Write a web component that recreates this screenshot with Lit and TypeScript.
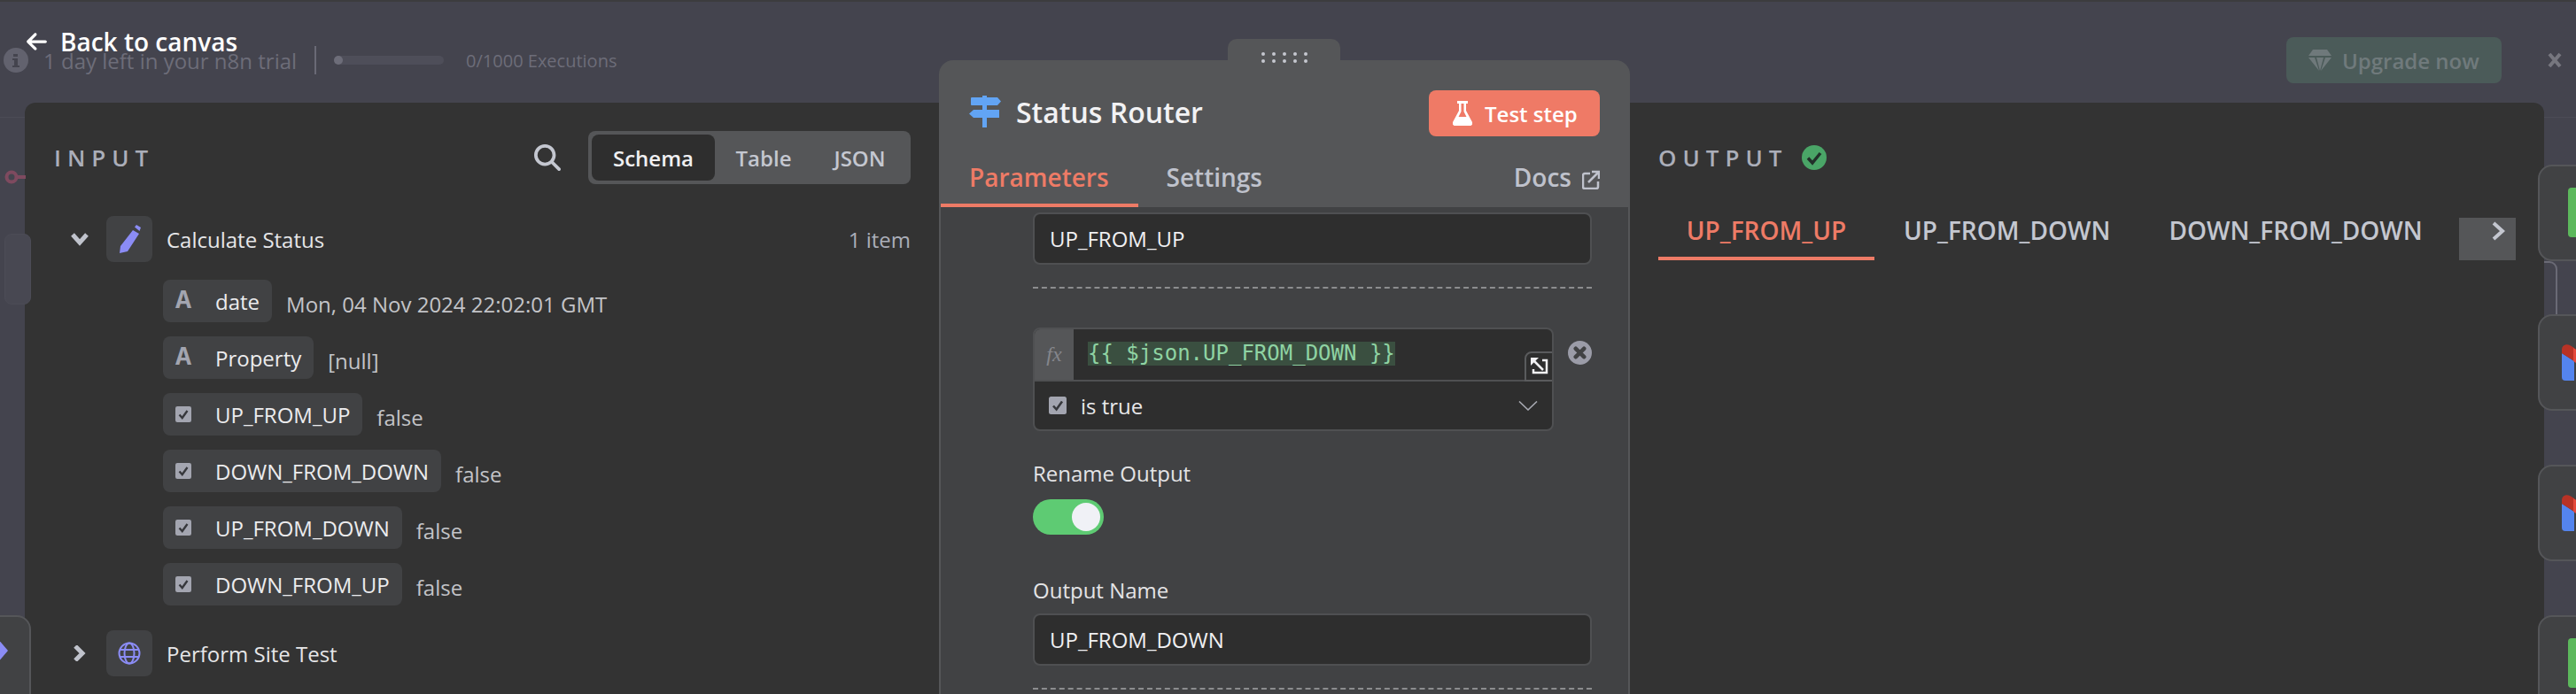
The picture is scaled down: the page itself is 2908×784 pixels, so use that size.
import { LitElement, html, css, svg } from "lit";
import { customElement } from "lit/decorators.js";

const arrowLeft = svg`<path fill="currentColor" d="M9.4 233.4c-12.5 12.5-12.5 32.8 0 45.3l160 160c12.5 12.5 32.8 12.5 45.3 0s12.5-32.8 0-45.3L109.2 288 416 288c17.7 0 32-14.3 32-32s-14.3-32-32-32l-306.7 0L214.6 118.6c12.5-12.5 12.5-32.8 0-45.3s-32.8-12.5-45.3 0l-160 160z"/>`;
const search = svg`<path fill="currentColor" d="M416 208c0 45.9-14.9 88.3-40 122.7L502.6 457.4c12.5 12.5 12.5 32.8 0 45.3s-32.8 12.5-45.3 0L330.7 376c-34.4 25.2-76.8 40-122.7 40C93.1 416 0 322.9 0 208S93.1 0 208 0S416 93.1 416 208zM208 352a144 144 0 1 0 0-288 144 144 0 1 0 0 288z"/>`;

type Field = { type: "text" | "bool"; name: string; value: string };
const fields: Field[] = [
  { type: "text", name: "date", value: "Mon, 04 Nov 2024 22:02:01 GMT" },
  { type: "text", name: "Property", value: "[null]" },
  { type: "bool", name: "UP_FROM_UP", value: "false" },
  { type: "bool", name: "DOWN_FROM_DOWN", value: "false" },
  { type: "bool", name: "UP_FROM_DOWN", value: "false" },
  { type: "bool", name: "DOWN_FROM_UP", value: "false" },
];

const checkBox = (cls: string) => html`<svg class=${cls} viewBox="0 0 20 20">
  <rect width="20" height="20" rx="2.5" fill="#a3a5b0"/>
  <path d="M5 10.5 8.6 14.5 15 5.5" fill="none" stroke="#37383c" stroke-width="2.6"/>
</svg>`;

const gmail = svg`<path d="M0 10 14 19V41H4a4 4 0 0 1-4-4z" fill="#5484ee"/><path d="M0 10V6C0 1 5-1 9 1L14 4V19z" fill="#b83225"/><path d="M13 4 27 12V28L13 19z" fill="#e4493b"/>`;

@customElement("app-root")
export class AppRoot extends LitElement {
  static styles = css`
    :host { display: block; position: relative; width: 2908px; height: 784px; overflow: hidden;
      font-family: "Open Sans", sans-serif; background: #44444e; color: #e8e8ea; }
    svg { display: block; flex: none; }
    .page { height: 784px; display: flex; flex-direction: column; border-top: 2px solid #3c3c3e; box-sizing: border-box; }

    .banner { height: 114px; box-sizing: border-box; padding: 18px 15px 0 4px; display: flex; align-items: center; flex: none; color: #6d6d79; }
    .info { width: 28px; height: 28px; }
    .trial { margin-left: 17px; font-size: 24px; white-space: nowrap; }
    .vr { width: 2px; height: 32px; background: #6a6a76; margin: 0 20px 0 20px; }
    .bar { width: 124px; height: 10px; border-radius: 5px; background: #4e4e59; }
    .bar i { display: block; width: 10px; height: 10px; border-radius: 50%; background: #6d6d79; }
    .execs { margin-left: 25px; font-size: 20px; white-space: nowrap; }
    .upgrade { margin-left: auto; width: 243px; height: 52px; box-sizing: border-box; padding-left: 25px; border-radius: 8px;
      background: #4b5b59; display: flex; align-items: center; gap: 12px; font-size: 24px; font-weight: 600; color: #707a7c; white-space: nowrap; }
    .gem { width: 26px; height: 24px; }
    .x { margin-left: 51px; width: 18px; height: 18px; color: #77777f; }

    .panel { flex: 1; margin: 0 36px 0 28px; background: #333333; border-radius: 12px 12px 0 0; display: grid; grid-template-columns: 1004px 840px 1fr; min-height: 0; }
    .in { padding: 32px 4px 0 33px; }
    .out { grid-column: 3; padding: 32px 32px 0 0; }
    .phead { height: 60px; display: flex; align-items: center; }
    .ptitle { font-size: 26px; font-weight: 600; letter-spacing: 7px; color: #abaeb9; white-space: nowrap; }
    .search { width: 30px; height: 30px; color: #c4c7d0; margin-left: auto; margin-right: 31px; }
    .switch { width: 364px; height: 60px; box-sizing: border-box; border-radius: 8px; background: #555658; padding: 4px; display: flex; align-items: center; font-size: 24px; font-weight: 600; color: #c4c7d0; }
    .switch span { height: 52px; display: flex; align-items: center; justify-content: center; }
    .switch .on { width: 139px; background: #2e2e2e; border-radius: 8px; color: #f0f0f2; }
    .switch .t { width: 110px; }
    .switch .j { width: 107px; }

    .node { display: flex; align-items: center; height: 52px; margin-top: 36px; font-size: 24px; color: #e6e6e8; }
    .node.second { margin-top: 28px; }
    .chev { width: 22px; height: 18px; margin-left: 18px; color: #c0c3cc; }
    .nicon { width: 52px; height: 52px; border-radius: 8px; background: #414244; margin-left: 19px; display: flex; align-items: center; justify-content: center; }
    .node b { font-weight: 400; margin-left: 16px; white-space: nowrap; }
    .count { margin-left: auto; color: #abaeb9; white-space: nowrap; }

    .fields { margin: 20px 0 0 123px; display: flex; flex-direction: column; gap: 16px; }
    .row { display: flex; align-items: center; height: 48px; }
    .pill { height: 48px; box-sizing: border-box; padding: 0 14px; border-radius: 8px; background: #414244; display: flex; align-items: center; font-size: 24px; color: #ececee; white-space: nowrap; }
    .ticon { width: 18px; margin-right: 27px; font: 700 30px "Liberation Mono", monospace; color: #a3a5b0; line-height: 1; display: flex; justify-content: center; }
    .pcheck { width: 18px; height: 18px; margin-right: 27px; }
    .val { margin: 6px 0 0 16px; font-size: 24px; color: #c3c4c8; white-space: nowrap; }

    .ohead { display: flex; align-items: center; gap: 16px; }
    .ok { width: 28px; height: 28px; }
    .otabs { height: 70px; margin-top: 16px; display: flex; align-items: flex-start; font-size: 28px; font-weight: 600; color: #c4c7d0; position: relative; }
    .otab { padding: 16px 33px 0; box-sizing: border-box; white-space: nowrap; line-height: 40px; }
    .otab.on { color: #ee7b66; border-bottom: 4px solid #ee7b66; height: 70px; width: 244px; padding: 16px 0 0; text-align: center; }
    .next { position: absolute; right: 0; top: 22px; width: 64px; height: 48px; background: #555658; }
    .next svg { position: absolute; left: 36px; top: 4px; width: 16px; height: 22px; }

    .ndv { position: absolute; left: 1060px; top: 68px; width: 780px; height: 716px; display: flex; flex-direction: column; }
    .grip { position: absolute; left: 326px; top: -24px; width: 127px; height: 24px; background: #555658; border-radius: 10px 10px 0 0; }
    .dots { position: absolute; left: 38px; top: 15px; width: 52px; display: grid; grid-template-columns: repeat(5, 4px); justify-content: space-between; row-gap: 4px; }
    .dots i { width: 4px; height: 4px; border-radius: 50%; background: #c5c7cf; }
    .nhead { background: #555658; border-radius: 16px 16px 0 0; height: 166px; box-sizing: border-box; padding: 34px 34px 0; flex: none; }
    .title { display: flex; align-items: center; height: 52px; }
    .sign { width: 36px; height: 36px; margin-top: -4px; }
    .title h1 { margin: -2px 0 0 17px; font-size: 32px; font-weight: 600; color: #f2f2f4; line-height: 44px; white-space: nowrap; }
    .test { margin-left: auto; width: 193px; height: 52px; border-radius: 8px; background: #ef7a66; display: flex; align-items: center; box-sizing: border-box; padding-left: 27px; gap: 14px; font-size: 24px; font-weight: 600; color: #fff; white-space: nowrap; }
    .flask { width: 22px; height: 28px; }
    .tabs { margin: 0 -34px; height: 80px; display: flex; font-size: 28px; font-weight: 600; color: #bfc2cc; padding: 0 34px 0 2px; }
    .tab { padding: 26px 33px 0 32px; height: 80px; box-sizing: border-box; line-height: 40px; white-space: nowrap; }
    .tab.on { color: #ee7b66; border-bottom: 4px solid #ee7b66; }
    .docs { margin-left: auto; padding-top: 26px; line-height: 40px; display: flex; gap: 12px; font-weight: 600; }
    .ext { width: 20px; height: 22px; margin-top: 12px; }
    .nbody { flex: 1; background: #414244; border-left: 2px solid #555658; border-right: 2px solid #555658; padding: 6px 41px 0 104px; font-size: 24px; color: #e8e8ea; min-height: 0; overflow: hidden; }
    .input { height: 59px; box-sizing: border-box; border: 2px solid #4f5052; border-radius: 8px; background: #2e2e2e; padding-left: 17px; display: flex; align-items: center; color: #f0f0f2; }
    .dash { height: 0; border-top: 2px dashed #8c8d8f; margin-top: 25px; }
    .exprow { display: flex; margin-top: 44px; gap: 17px; align-items: flex-start; }
    .expr { width: 588px; height: 117px; box-sizing: border-box; border: 2px solid #4f5052; border-radius: 8px; background: #2e2e2e; display: flex; flex-direction: column; overflow: hidden; position: relative; }
    .ex1 { height: 57px; display: flex; border-bottom: 2px solid #4f5052; flex: none; }
    .fx { width: 44px; background: #555658; font: italic 24px "Liberation Serif", serif; color: #85868c; display: flex; align-items: center; justify-content: center; flex: none; }
    .code { margin: 14px 0 0 16px; height: 27px; padding: 0; background: #3a4f40; font: 24px/27px "DejaVu Sans Mono", monospace; color: #8fd3a3; white-space: pre; }
    .expand { position: absolute; right: -2px; top: 25px; width: 33px; height: 34px; box-sizing: border-box; border: 2px solid #5a5b5d; border-radius: 8px 0 0 0; background: #2e2e2e; }
    .expand svg { position: absolute; left: 5px; top: 4px; width: 20px; height: 22px; }
    .ex2 { flex: 1; display: flex; align-items: center; padding-left: 16px; color: #e8e8ea; }
    .ex2 .ck { width: 20px; height: 20px; margin-right: 16px; }
    .ex2 .down { margin-left: auto; margin-right: 16px; width: 22px; height: 11px; }
    .close { width: 27px; height: 27px; margin-top: 15px; margin-left: -1px; }
    .label { height: 32px; line-height: 32px; white-space: nowrap; color: #e4e4e6; }
    .l1 { margin-top: 32px; }
    .l2 { margin-top: 47px; margin-bottom: 10px; }
    .toggle { margin-top: 13px; width: 80px; height: 40px; border-radius: 20px; background: #5ecb73; position: relative; }
    .toggle i { position: absolute; right: 4px; top: 4px; width: 32px; height: 32px; border-radius: 50%; background: #f0f1f6; }

    .card { position: absolute; box-sizing: border-box; background: #414244; border: 2px solid #555659; border-radius: 16px; overflow: hidden; }
    .cl { left: -40px; top: 695px; width: 75px; height: 120px; }
    .cl svg { position: absolute; left: 22px; top: 22px; width: 26px; height: 32px; }
    .cr { left: 2865px; width: 90px; height: 109px; }
    .c1 { top: 186px; } .c2 { top: 355px; } .c3 { top: 525px; } .c4 { top: 695px; }
    .green { position: absolute; left: 32px; top: 24px; width: 40px; height: 56px; background: #5cb85c; border-radius: 4px; }
    .gm { position: absolute; left: 25px; top: 32px; width: 40px; height: 41px; }
    .ghost { position: absolute; left: 5px; top: 264px; width: 30px; height: 80px; background: #484852; border: 1px solid #4c4c56; border-radius: 8px; box-sizing: border-box; }
    .key { position: absolute; left: 5px; top: 192px; width: 24px; height: 16px; }
    .hl { position: absolute; top: 132px; height: 1px; background: #4c4c56; }
    .hl.a { left: 0; width: 28px; } .hl.b { left: 2872px; width: 36px; }
    .wire { position: absolute; left: 2872px; top: 294px; width: 16px; height: 61px; }

    .back { position: absolute; left: 29px; top: 27px; display: flex; align-items: center; gap: 14px; height: 40px; font-size: 28px; font-weight: 600; color: #fff; white-space: nowrap; }
    .back svg { width: 25px; height: 26px; }
  `;

  render() {
    return html`
      <div class="page">
        <div class="banner">
          <svg class="info" viewBox="0 0 28 28"><circle cx="14" cy="14" r="14" fill="#62626e"/><path d="M11 7h5v3h-5zM10 12h6v8h2v2h-8v-2h2v-6h-2z" fill="#44444e"/></svg>
          <span class="trial">1 day left in your n8n trial</span>
          <span class="vr"></span>
          <span class="bar"><i></i></span>
          <span class="execs">0/1000 Executions</span>
          <span class="upgrade">
            <svg class="gem" viewBox="0 0 26 24"><path fill="#6f797b" d="M5 0h16l5 7H0zM0 9h7l5 15zM9 9h8l-4 15zM19 9h7L14 24z"/></svg>
            Upgrade now
          </span>
          <svg class="x" viewBox="0 0 18 18"><path d="M3 2 15 16M15 2 3 16" stroke="currentColor" stroke-width="4" fill="none"/></svg>
        </div>
        <div class="panel">
          <section class="in">
            <div class="phead">
              <span class="ptitle">INPUT</span>
              <svg class="search" viewBox="0 0 512 512">${search}</svg>
              <div class="switch">
                <span class="on">Schema</span><span class="t">Table</span><span class="j">JSON</span>
              </div>
            </div>
            <div class="node">
              <svg class="chev" viewBox="0 0 22 18"><path d="M3 4 11 13 19 4" fill="none" stroke="currentColor" stroke-width="5"/></svg>
              <span class="nicon">
                <svg width="26" height="32" viewBox="0 0 26 32"><path fill="#8b8cf5" d="M17 6 24 10 11 30 2 32 3 24zM19 2.500 21 0 26 3 24.500 7z"/></svg>
              </span>
              <b>Calculate Status</b>
              <span class="count">1 item</span>
            </div>
            <div class="fields">
              ${fields.map(
                (f) => html`<div class="row">
                  <span class="pill">
                    ${f.type === "text" ? html`<span class="ticon">A</span>` : checkBox("pcheck")}
                    ${f.name}
                  </span>
                  <span class="val">${f.value}</span>
                </div>`
              )}
            </div>
            <div class="node second">
              <svg class="chev" viewBox="0 0 22 18"><path d="M6 1 14 9 6 17" fill="none" stroke="currentColor" stroke-width="5"/></svg>
              <span class="nicon">
                <svg width="26" height="26" viewBox="0 0 26 26" fill="none" stroke="#8b8cf5" stroke-width="2"><circle cx="13" cy="13" r="11.500"/><ellipse cx="13" cy="13" rx="5.500" ry="11.500"/><path d="M2 9h22M2 17h22"/></svg>
              </span>
              <b>Perform Site Test</b>
            </div>
          </section>
          <section class="out">
            <div class="phead ohead">
              <span class="ptitle">OUTPUT</span>
              <svg class="ok" viewBox="0 0 28 28"><circle cx="14" cy="14" r="14" fill="#4aa567"/><path d="M7 14.500 12 20 21 9" fill="none" stroke="#22302a" stroke-width="3.500"/></svg>
            </div>
            <div class="otabs">
              <span class="otab on">UP_FROM_UP</span>
              <span class="otab">UP_FROM_DOWN</span>
              <span class="otab">DOWN_FROM_DOWN</span>
              <span class="next"><svg viewBox="0 0 16 22"><path d="M3 2 13 11 3 20" fill="none" stroke="#c4c7d0" stroke-width="4"/></svg></span>
            </div>
          </section>
        </div>
      </div>

      <span class="hl a"></span><span class="hl b"></span>
      <svg class="key" viewBox="0 0 24 16"><circle cx="8" cy="8" r="5.500" fill="none" stroke="#7e4a5f" stroke-width="4"/><path d="M13 8h11" stroke="#7e4a5f" stroke-width="4"/></svg>
      <div class="ghost"></div>
      <div class="card cl"><svg viewBox="0 0 26 32"><path d="M12 1 25 16 12 31 0 16z" fill="#8b8cf5"/></svg></div>

      <svg class="wire" viewBox="0 0 16 61"><path d="M0 2h6a8 8 0 0 1 8 8V61" fill="none" stroke="#6a6a75" stroke-width="2"/></svg>
      <div class="card cr c1"><i class="green"></i></div>
      <div class="card cr c2"><svg class="gm" viewBox="0 0 40 41">${gmail}</svg></div>
      <div class="card cr c3"><svg class="gm" viewBox="0 0 40 41">${gmail}</svg></div>
      <div class="card cr c4"><i class="green"></i></div>

      <div class="back"><svg viewBox="0 0 448 512">${arrowLeft}</svg>Back to canvas</div>

      <div class="ndv">
        <div class="grip"><div class="dots">${Array.from({ length: 10 }, () => html`<i></i>`)}</div></div>
        <header class="nhead">
          <div class="title">
            <svg class="sign" viewBox="0 0 36 36"><path fill="#62a4f4" d="M15 0h5v2h12l4 4.500-4 4.500h-12v5h14v9H20v11h-5V25H5L0 20.500 5 16h10v-5H3a1 1 0 0 1-1-1V3a1 1 0 0 1 1-1h12z"/></svg>
            <h1>Status Router</h1>
            <span class="test">
              <svg class="flask" viewBox="0 0 22 28"><path fill="#fff" d="M5 0h12v3h-2v8l7 13c.8 2-.3 4-2.500 4H2.500C.3 28-.8 26 0 24l7-13V3H5zM9.500 3v9L6.500 18h9l-3-6V3z"/></svg>
              Test step
            </span>
          </div>
          <nav class="tabs">
            <span class="tab on">Parameters</span>
            <span class="tab">Settings</span>
            <span class="docs">Docs
              <svg class="ext" viewBox="0 0 20 22" fill="none" stroke="#bfc2cc" stroke-width="2.500"><path d="M9 4H3a2 2 0 0 0-2 2v13a2 2 0 0 0 2 2h13a2 2 0 0 0 2-2v-6"/><path d="M7 14 18 3M11 2h8v8"/></svg>
            </span>
          </nav>
        </header>
        <div class="nbody">
          <div class="input">UP_FROM_UP</div>
          <div class="dash"></div>
          <div class="exprow">
            <div class="expr">
              <div class="ex1"><span class="fx">fx</span><span class="code">{{ $json.UP_FROM_DOWN }}</span></div>
              <div class="ex2">${checkBox("ck")}is true
                <svg class="down" viewBox="0 0 22 11"><path d="M1 .5 11 10 21 .5" fill="none" stroke="#a6a8b0" stroke-width="1.600"/></svg>
              </div>
              <div class="expand"><svg viewBox="0 0 20 22"><path d="M0 1h9L0 10z" fill="#f0f0f2"/><path d="M3 4 14 15M13 4h5v14H3v-4" fill="none" stroke="#f0f0f2" stroke-width="2.500"/></svg></div>
            </div>
            <svg class="close" viewBox="0 0 26 26"><circle cx="13" cy="13" r="13" fill="#9b9ca8"/><path d="M8.500 8.500 17.500 17.500M17.500 8.500 8.500 17.500" stroke="#414244" stroke-width="4.500" stroke-linecap="round"/></svg>
          </div>
          <div class="label l1">Rename Output</div>
          <div class="toggle"><i></i></div>
          <div class="label l2">Output Name</div>
          <div class="input">UP_FROM_DOWN</div>
          <div class="dash"></div>
        </div>
      </div>
    `;
  }
}
